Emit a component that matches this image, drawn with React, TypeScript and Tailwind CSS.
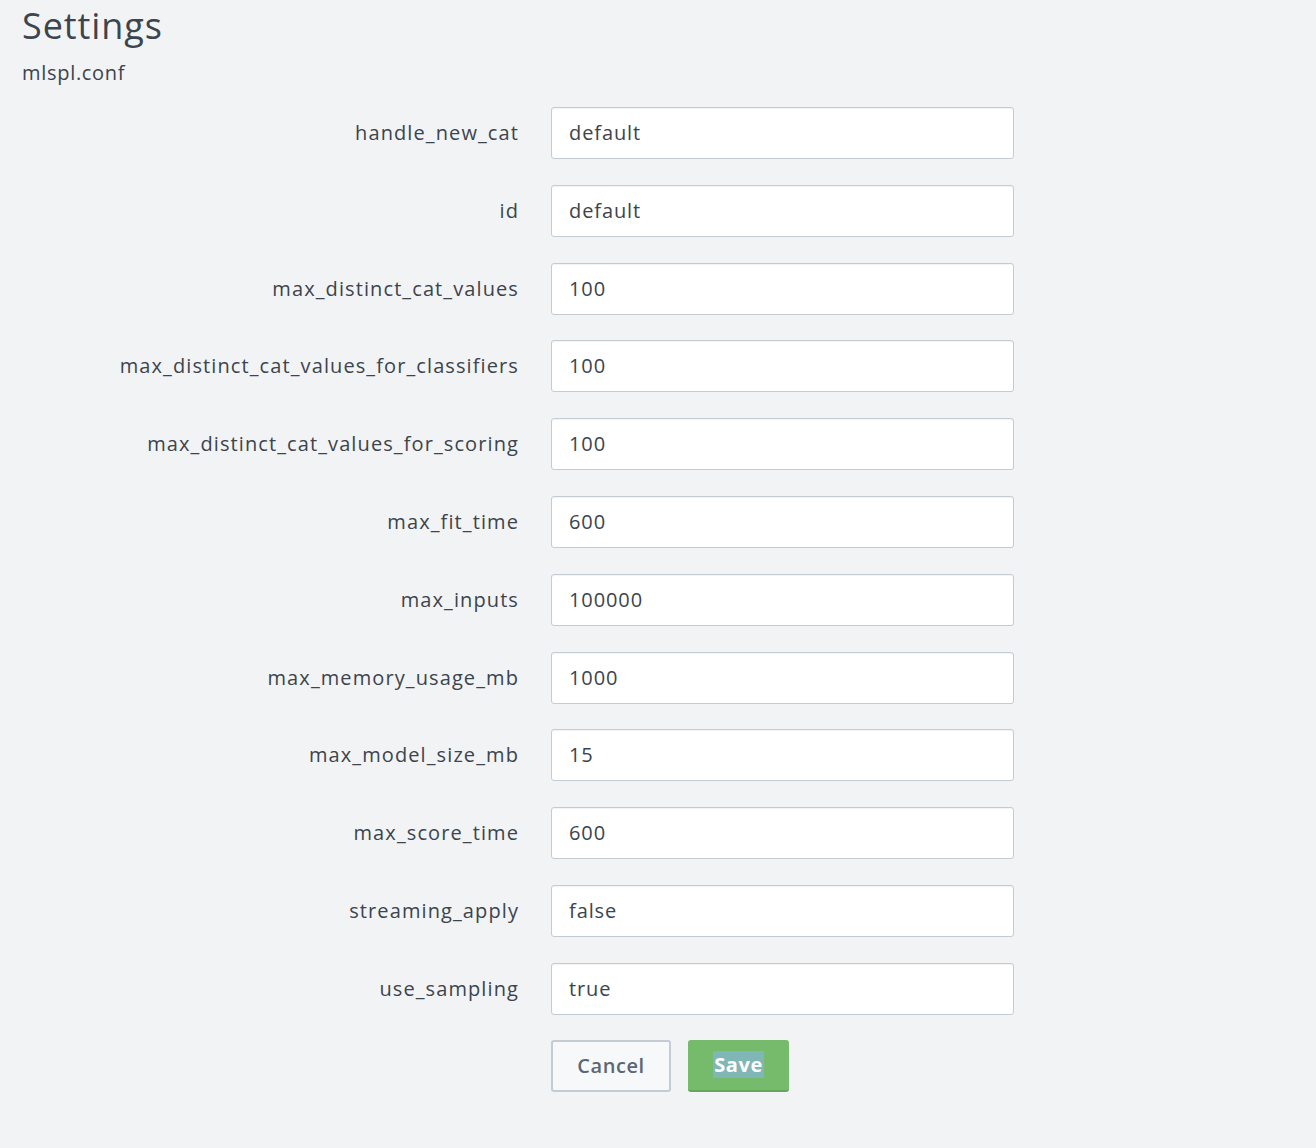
import React from "react";

const rows: [string, string][] = [
  ["handle_new_cat", "default"],
  ["id", "default"],
  ["max_distinct_cat_values", "100"],
  ["max_distinct_cat_values_for_classifiers", "100"],
  ["max_distinct_cat_values_for_scoring", "100"],
  ["max_fit_time", "600"],
  ["max_inputs", "100000"],
  ["max_memory_usage_mb", "1000"],
  ["max_model_size_mb", "15"],
  ["max_score_time", "600"],
  ["streaming_apply", "false"],
  ["use_sampling", "true"],
];

export default function App() {
  return (
    <div
      className="min-h-[1148px] w-full bg-[#f2f3f5] text-[#3c444d]"
      style={{ fontFamily: '"Open Sans", "Liberation Sans", sans-serif' }}
    >
      <div className="pl-[22px] pt-[2px]">
        <h1 className="text-[36px] leading-[48px] font-normal tracking-[0.9px] text-[#3c444d]">Settings</h1>
        <div className="mt-[9px] text-[20px] leading-[28px] tracking-[0.7px]">mlspl.conf</div>
      </div>
      <div className="mt-[20px] grid grid-cols-[518px_463px] gap-x-[33px] gap-y-[25.8px]">
        {rows.map(([label, value]) => (
          <React.Fragment key={label}>
            <div className="-mr-[1px] flex h-[52px] items-center justify-end text-[20px] tracking-[1.1px] text-[#3c444d]">
              {label}
            </div>
            <div className="flex h-[52px] items-center rounded-[3px] border border-[#c3cbd4] bg-white pl-[17px] text-[20px] tracking-[0.9px] text-[#3c444d] shadow-[inset_0_1px_1px_rgba(0,0,0,0.05)]">
              {value}
            </div>
          </React.Fragment>
        ))}
        <div />
        <div className="-mt-[1px] flex gap-[17px]">
          <button className="h-[52px] w-[120px] rounded-[3px] border-2 border-[#c3cbd4] bg-[#f7f8fa] text-[20px] font-semibold tracking-[0.6px] text-[#5c6773]">
            Cancel
          </button>
          <button className="h-[52px] w-[101px] rounded-[3px] border-b-2 border-[#65a65c] bg-[#75bb6b] text-[20px] font-bold tracking-[0.6px] text-white">
            <span className="bg-[#80b6b6] px-[1px]">Save</span>
          </button>
        </div>
      </div>
    </div>
  );
}
